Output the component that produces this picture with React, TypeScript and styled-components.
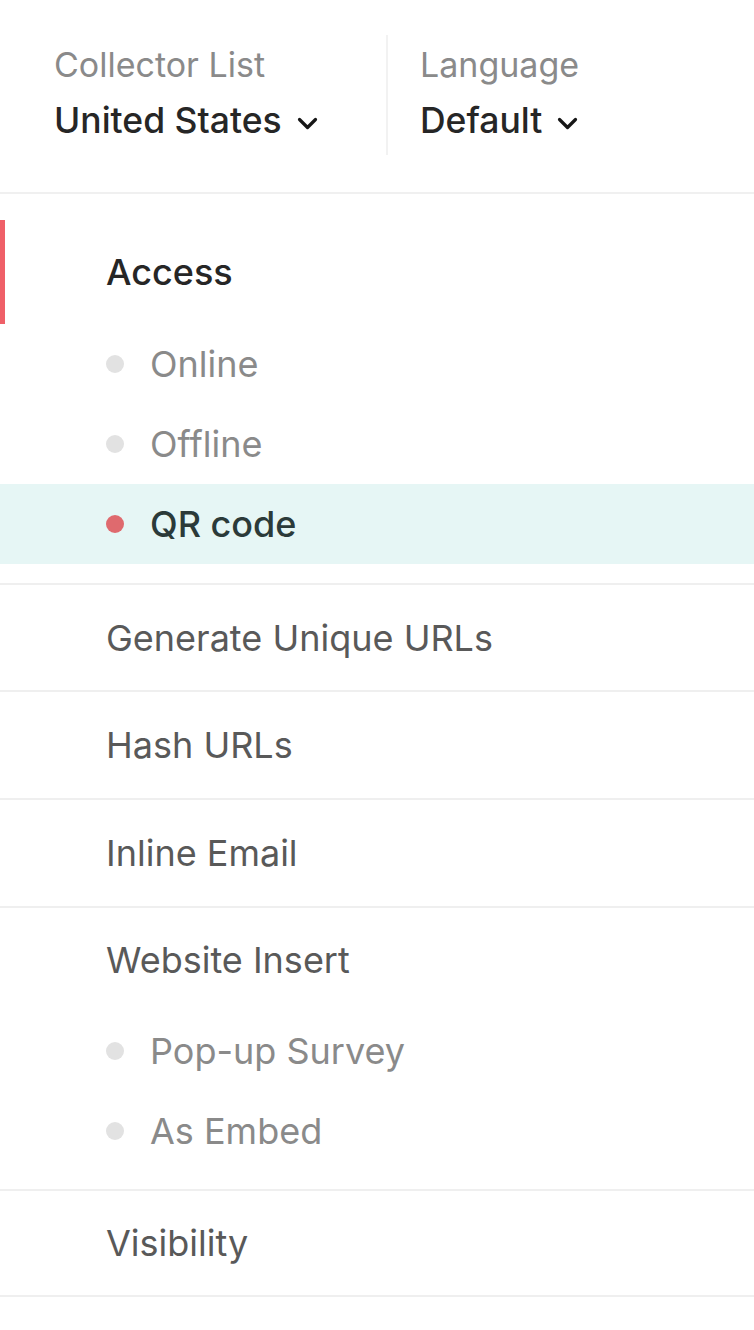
import React from "react";
import styled, { createGlobalStyle } from "styled-components";

const Global = createGlobalStyle`
  html, body { margin: 0; padding: 0; background: #ffffff; }
  body { font-family: Inter, "Noto Sans", sans-serif; -webkit-font-smoothing: antialiased; }
  * { box-sizing: border-box; }
`;

const Page = styled.div`
  width: 754px;
  min-height: 1330px;
  background: #fff;
`;

const Header = styled.header`
  display: flex;
  align-items: stretch;
  height: 194px;
  padding: 35px 0 37px 54px;
  border-bottom: 2px solid #f0f0f0;
`;

const Picker = styled.div<{ $divider?: boolean }>`
  display: flex;
  flex-direction: column;
  width: ${(p) => (p.$divider ? "334px" : "auto")};
  padding-left: ${(p) => (p.$divider ? "0" : "32px")};
  border-right: ${(p) => (p.$divider ? "2px solid #f2f2f2" : "none")};
`;

const PickerLabel = styled.div`
  margin-top: 5px;
  height: 50px;
  line-height: 50px;
  font-size: 34px;
  color: #8a8a8a;
  white-space: nowrap;
`;

const PickerValue = styled.div`
  display: flex;
  align-items: center;
  gap: 15px;
  height: 62px;
  line-height: 62px;
  font-size: 35.5px;
  font-weight: 500;
  color: #262626;
  white-space: nowrap;
`;

const ChevronIcon = styled.svg`
  flex: none;
  margin-top: 6px;
`;

const Chevron = () => (
  <ChevronIcon width="21" height="14" viewBox="0 0 21 14">
    <path d="M2.5 2.5 L10.5 10.5 L18.5 2.5" fill="none" stroke="#161616" strokeWidth="3.2" strokeLinecap="round" strokeLinejoin="round" />
  </ChevronIcon>
);

const Section = styled.section<{ $top?: number; $bottom?: number }>`
  padding-top: ${(p) => p.$top ?? 0}px;
  padding-bottom: ${(p) => p.$bottom ?? 0}px;
  border-bottom: 2px solid #efefef;
`;

const Heading = styled.div<{ $active?: boolean; $h: number }>`
  display: flex;
  align-items: center;
  height: ${(p) => p.$h}px;
  padding-left: 106px;
  font-size: 36px;
  font-weight: ${(p) => (p.$active ? 500 : 400)};
  color: ${(p) => (p.$active ? "#262626" : "#595959")};
  box-shadow: ${(p) => (p.$active ? "inset 5px 0 0 #ef6068" : "none")};
`;

const SubItem = styled.div<{ $selected?: boolean }>`
  display: flex;
  align-items: center;
  gap: 26px;
  height: 80px;
  padding-left: 106px;
  font-size: 36px;
  font-weight: ${(p) => (p.$selected ? 500 : 400)};
  color: ${(p) => (p.$selected ? "#2b3a39" : "#8a8a8a")};
  background: ${(p) => (p.$selected ? "#e6f6f5" : "transparent")};
`;

const Dot = styled.span<{ $selected?: boolean }>`
  width: 18px;
  height: 18px;
  border-radius: 50%;
  flex: none;
  background: ${(p) => (p.$selected ? "#df6a6e" : "#e2e2e2")};
`;

export default function App() {
  return (
    <Page>
      <Global />
      <Header>
        <Picker $divider>
          <PickerLabel>Collector List</PickerLabel>
          <PickerValue>
            United States <Chevron />
          </PickerValue>
        </Picker>
        <Picker>
          <PickerLabel>Language</PickerLabel>
          <PickerValue>
            Default <Chevron />
          </PickerValue>
        </Picker>
      </Header>

      <Section $top={26} $bottom={19}>
        <Heading $active $h={104}>Access</Heading>
        <SubItem><Dot />Online</SubItem>
        <SubItem><Dot />Offline</SubItem>
        <SubItem $selected><Dot $selected />QR code</SubItem>
      </Section>
      <Section>
        <Heading $h={105}>Generate Unique URLs</Heading>
      </Section>
      <Section>
        <Heading $h={106}>Hash URLs</Heading>
      </Section>
      <Section>
        <Heading $h={106}>Inline Email</Heading>
      </Section>
      <Section $bottom={18}>
        <Heading $h={103}>Website Insert</Heading>
        <SubItem><Dot />Pop-up Survey</SubItem>
        <SubItem><Dot />As Embed</SubItem>
      </Section>
      <Section>
        <Heading $h={104}>Visibility</Heading>
      </Section>
    </Page>
  );
}
